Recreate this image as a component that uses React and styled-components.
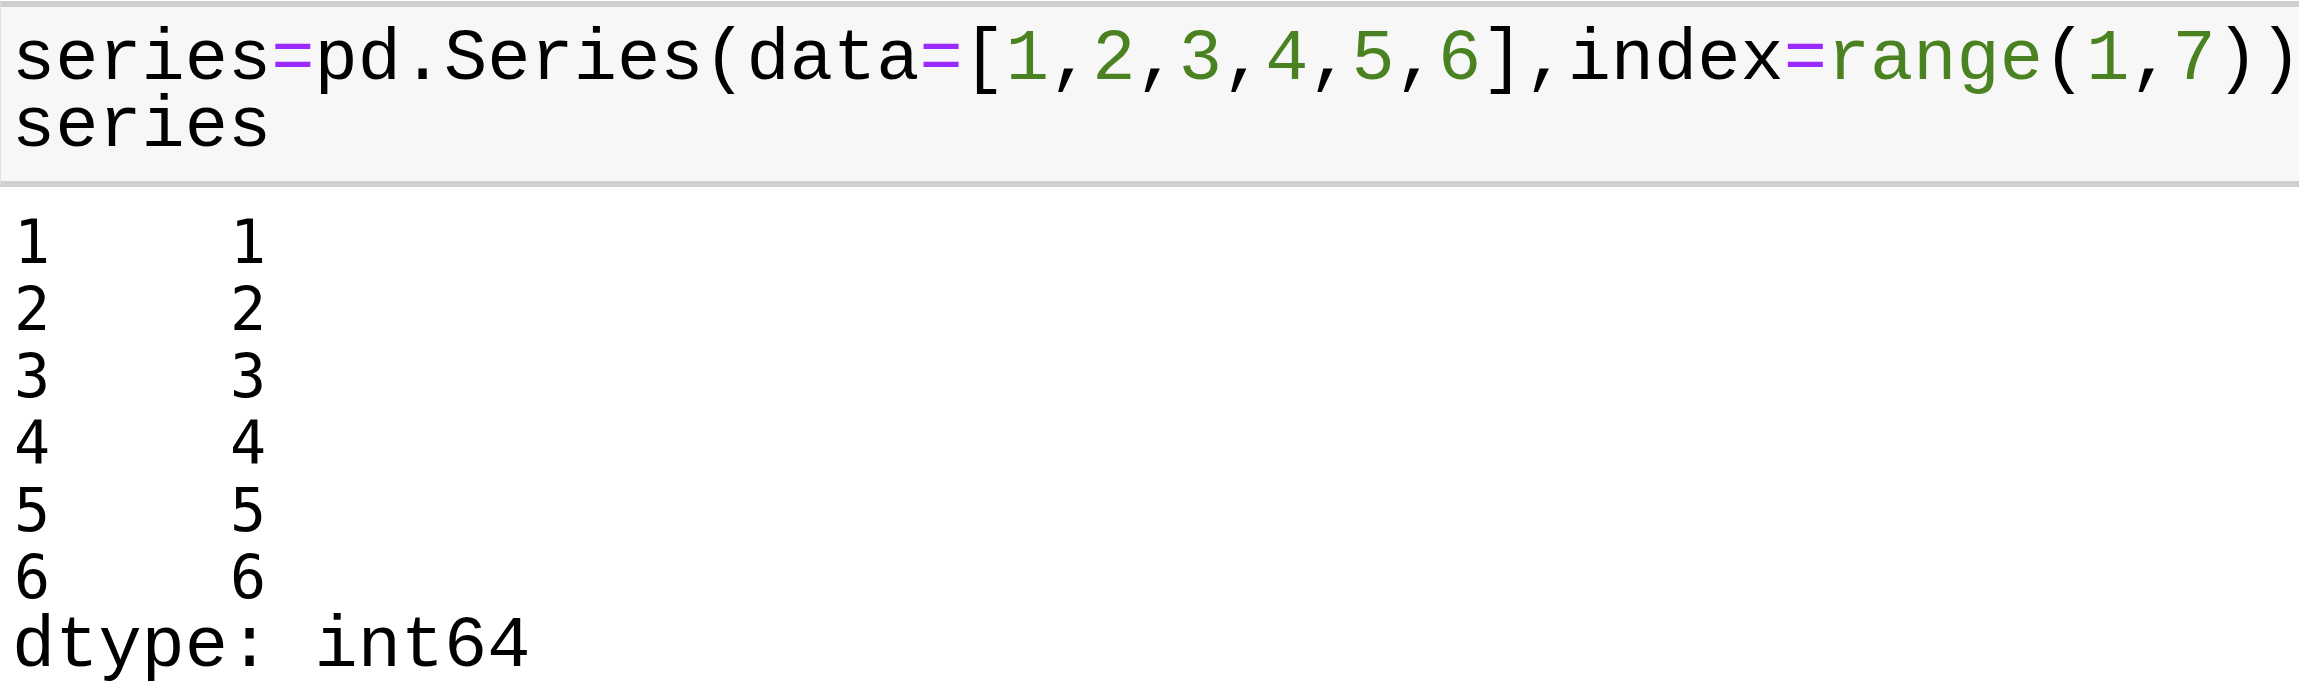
import React from "react";
import styled, { createGlobalStyle } from "styled-components";

const GlobalStyle = createGlobalStyle`
  html, body {
    margin: 0;
    padding: 0;
    background: #ffffff;
  }
  body {
    overflow: hidden;
  }
`;

const Notebook = styled.div`
  padding-top: 1px;
  width: 2299px;
`;

const CodeCell = styled.div`
  background: #f7f7f7;
  border-top: 6px solid #cfcfcf;
  border-bottom: 6px solid #cfcfcf;
  border-left: 1px solid #e2e2e2;
  padding: 20px 0 20px 11px;
`;

const Code = styled.pre`
  margin: 0;
  font-family: "Liberation Mono", "Courier New", monospace;
  font-size: 72px;
  line-height: 67px;
  color: #000000;
  white-space: pre;
`;

const Op = styled.span`
  color: #9a2bff;
`;

const Num = styled.span`
  color: #4a8221;
`;

const Output = styled.div`
  padding: 22px 0 0 14px;
`;

const SeriesTable = styled.div`
  display: grid;
  grid-template-columns: 216px auto;
  font-family: "DejaVu Sans Mono", monospace;
  font-size: 60px;
  line-height: 67px;
  color: #000000;
`;

const Cell = styled.span`
  white-space: pre;
`;

const Dtype = styled.div`
  font-family: "Liberation Mono", "Courier New", monospace;
  font-size: 72px;
  line-height: 67px;
  padding-top: 3px;
  margin-left: -2px;
  white-space: pre;
`;

const values = [1, 2, 3, 4, 5, 6];

export default function App() {
  return (
    <Notebook>
      <GlobalStyle />
      <CodeCell>
        <Code>
          series<Op>=</Op>pd.Series(data<Op>=</Op>[<Num>1</Num>,<Num>2</Num>,<Num>3</Num>,
          <Num>4</Num>,<Num>5</Num>,<Num>6</Num>],index<Op>=</Op>
          <Num>range</Num>(<Num>1</Num>,<Num>7</Num>)){"\n"}series
        </Code>
      </CodeCell>
      <Output>
        <SeriesTable>
          {values.map((v, i) => (
            <React.Fragment key={i}>
              <Cell>{i + 1}</Cell>
              <Cell>{v}</Cell>
            </React.Fragment>
          ))}
        </SeriesTable>
        <Dtype>dtype: int64</Dtype>
      </Output>
    </Notebook>
  );
}
